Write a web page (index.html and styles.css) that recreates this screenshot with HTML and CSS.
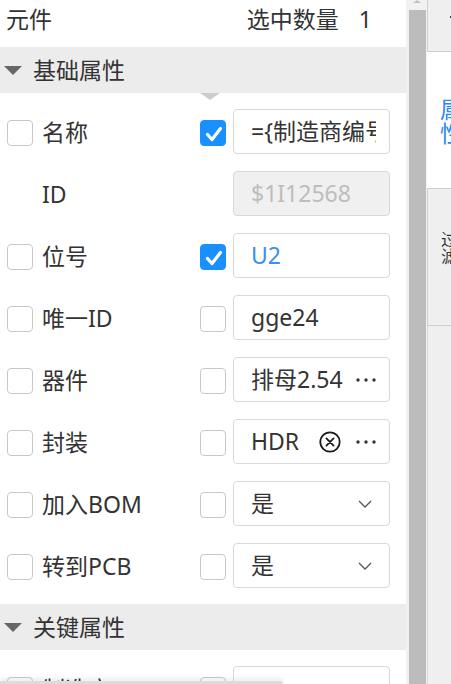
FILE: index.html
```html
<!DOCTYPE html>
<html lang="zh">
<head>
<meta charset="utf-8">
<title>元件属性</title>
<link rel="stylesheet" href="styles.css">
</head>
<body>
<div class="app">
  <div class="main">
    <div class="top">
      <span>元件</span>
      <span class="count">选中数量<span class="num">1</span></span>
    </div>

    <div class="sec-head"><span class="caret"></span><span>基础属性</span><span class="pointer"></span></div>
    <div class="rows">
      <div class="row">
        <span class="cb"></span><span class="label">名称</span>
        <span class="cb on"><svg viewBox="0 0 26 26"><path d="M6.5 13.5 L11 18.5 L19.5 7.5" fill="none" stroke="#fff" stroke-width="3.2" stroke-linecap="round" stroke-linejoin="round"/></svg></span>
        <div class="field"><span class="val">={制造商编号}</span></div>
      </div>
      <div class="row">
        <span class="cb ghost"></span><span class="label">ID</span>
        <span class="cb ghost"></span>
        <div class="field disabled"><span class="val">$1I12568</span></div>
      </div>
      <div class="row">
        <span class="cb"></span><span class="label">位号</span>
        <span class="cb on"><svg viewBox="0 0 26 26"><path d="M6.5 13.5 L11 18.5 L19.5 7.5" fill="none" stroke="#fff" stroke-width="3.2" stroke-linecap="round" stroke-linejoin="round"/></svg></span>
        <div class="field"><span class="val blue">U2</span></div>
      </div>
      <div class="row">
        <span class="cb"></span><span class="label">唯一ID</span>
        <span class="cb"></span>
        <div class="field"><span class="val">gge24</span></div>
      </div>
      <div class="row">
        <span class="cb"></span><span class="label">器件</span>
        <span class="cb"></span>
        <div class="field"><span class="val">排母2.54</span>
          <svg class="dots" viewBox="0 0 20 4"><circle cx="2" cy="2" r="1.7"/><circle cx="10" cy="2" r="1.7"/><circle cx="18" cy="2" r="1.7"/></svg>
        </div>
      </div>
      <div class="row">
        <span class="cb"></span><span class="label">封装</span>
        <span class="cb"></span>
        <div class="field"><span class="val">HDR</span>
          <svg class="clear" viewBox="0 0 22 22"><circle cx="11" cy="11" r="9.7" fill="none" stroke="#1a1a1a" stroke-width="1.8"/><path d="M7.4 7.4 L14.6 14.6 M14.6 7.4 L7.4 14.6" stroke="#1a1a1a" stroke-width="1.8" stroke-linecap="round"/></svg>
          <svg class="dots" viewBox="0 0 20 4"><circle cx="2" cy="2" r="1.7"/><circle cx="10" cy="2" r="1.7"/><circle cx="18" cy="2" r="1.7"/></svg>
        </div>
      </div>
      <div class="row">
        <span class="cb"></span><span class="label">加入BOM</span>
        <span class="cb"></span>
        <div class="field select"><span class="val">是</span>
          <svg class="chev" viewBox="0 0 14 8"><path d="M1 1 L7 7 L13 1" fill="none" stroke="#555" stroke-width="1.3"/></svg>
        </div>
      </div>
      <div class="row">
        <span class="cb"></span><span class="label">转到PCB</span>
        <span class="cb"></span>
        <div class="field select"><span class="val">是</span>
          <svg class="chev" viewBox="0 0 14 8"><path d="M1 1 L7 7 L13 1" fill="none" stroke="#555" stroke-width="1.3"/></svg>
        </div>
      </div>
    </div>

    <div class="sec-head"><span class="caret"></span><span>关键属性</span></div>
    <div class="rows">
      <div class="row">
        <span class="cb"></span><span class="label">制造商</span>
        <span class="cb"></span>
        <div class="field"><span class="val"></span></div>
      </div>
    </div>
  </div>

  <div class="vscroll"><span class="up"></span><div class="thumb"></div></div>

  <div class="side">
    <div class="tab first"><span class="mark"></span></div>
    <div class="tab active"><span class="vtext">属性</span></div>
    <div class="tab filter"><span class="vtext small">过滤</span></div>
    <div class="tab rest"></div>
  </div>

  <div class="hscroll"></div>
</div>
</body>
</html>
```

FILE: styles.css
```css
html, body {
  margin: 0;
  padding: 0;
  height: 100%;
  overflow: hidden;
  background: #fff;
}

body {
  font-family: "Noto Sans", "Noto Sans CJK SC", sans-serif;
  font-size: 23px;
  color: #333;
}

.app {
  display: flex;
  height: 684px;
  position: relative;
  overflow: hidden;
}

.main {
  width: 406px;
  flex: none;
  overflow: hidden;
}

.top {
  height: 39px;
  padding: 0 34px 8px 6px;
  display: flex;
  align-items: center;
  justify-content: space-between;
  line-height: 1;
}

.count .num {
  margin-left: 20px;
}

.sec-head {
  position: relative;
  height: 46px;
  background: #ececec;
  display: flex;
  align-items: center;
  line-height: 1;
}

.caret {
  width: 0;
  height: 0;
  margin: 0 11px 0 4px;
  border-left: 9px solid transparent;
  border-right: 9px solid transparent;
  border-top: 9px solid #666;
}

.pointer {
  position: absolute;
  left: 200px;
  bottom: -7px;
  width: 0;
  height: 0;
  border-left: 10.5px solid transparent;
  border-right: 10.5px solid transparent;
  border-top: 7px solid #cdcdcd;
}

.rows {
  display: flex;
  flex-direction: column;
  gap: 17px;
  padding: 16px 0;
}

.row {
  display: flex;
  align-items: center;
  height: 45px;
  padding: 0 16px 0 7px;
}

.cb {
  width: 26px;
  height: 26px;
  box-sizing: border-box;
  border: 1px solid #c8c8c8;
  border-radius: 4px;
  flex: none;
  margin-top: 3px;
  background: #fff;
}

.cb svg {
  display: block;
  width: 26px;
  height: 26px;
}

.cb.on {
  background: #1890ff;
  border-color: #1890ff;
}

.cb.ghost {
  visibility: hidden;
}

.label {
  flex: 1;
  margin-left: 9px;
  line-height: 1.2;
  white-space: nowrap;
  padding-top: 3px;
}

.field {
  width: 157px;
  height: 45px;
  box-sizing: border-box;
  flex: none;
  margin-left: 7px;
  border: 1px solid #d9d9d9;
  border-radius: 4px;
  background: #fff;
  display: flex;
  align-items: center;
  padding: 0 13px 0 17px;
  overflow: hidden;
}

.field.disabled {
  background: #f0f0f0;
  color: #bdbdbd;
}

.val {
  flex: 1;
  min-width: 0;
  overflow: hidden;
  white-space: nowrap;
  line-height: 1.35;
  text-overflow: clip;
}

.val.blue {
  color: #3d8ef0;
}

.dots {
  width: 20px;
  height: 4px;
  flex: none;
  fill: #333;
}

.clear {
  width: 22px;
  height: 22px;
  flex: none;
  margin-right: 15px;
}

.field.select {
  padding-right: 17px;
}

.chev {
  width: 14px;
  height: 8px;
  flex: none;
}

.vscroll {
  width: 21px;
  flex: none;
  background: #f1f1f1;
  display: flex;
  flex-direction: column;
  align-items: center;
  position: relative;
}

.vscroll .up {
  position: absolute;
  top: 0;
  left: 7px;
  width: 0;
  height: 0;
  border-left: 4.5px solid transparent;
  border-right: 4.5px solid transparent;
  border-bottom: 3px solid #c2c2c2;
}

.thumb {
  margin-top: 10px;
  margin-left: 1px;
  width: 17px;
  flex: 1;
  background: #bcbcbc;
}

.side {
  flex: 1;
  display: flex;
  flex-direction: column;
  background: #fff;
}

.tab {
  box-sizing: border-box;
  padding-left: 13px;
  display: flex;
}

.tab.first {
  height: 52px;
  background: #efefef;
  border-left: 1px solid #cfcfcf;
  border-bottom: 1px solid #cfcfcf;
}

.tab.first .mark {
  margin-top: 16px;
  margin-left: 9px;
  width: 3px;
  height: 2px;
  background: #333;
}

.tab.active {
  height: 136px;
  align-items: center;
  color: #2d86f0;
}

.tab.filter {
  height: 138px;
  background: #efefef;
  border-left: 1px solid #cfcfcf;
  border-top: 1px solid #cfcfcf;
  border-bottom: 1px solid #cfcfcf;
  padding-top: 41px;
}

.tab.rest {
  flex: 1;
  background: #efefef;
  border-left: 1px solid #dadada;
}

.vtext {
  width: 1em;
  line-height: 24px;
  word-break: break-all;
  font-family: "Noto Sans CJK SC", sans-serif;
}

.vtext.small {
  font-size: 17px;
  line-height: 17px;
}

.hscroll {
  position: absolute;
  left: 0;
  bottom: 0;
  width: 283px;
  height: 3px;
  background: #dcdcdc;
  box-shadow: 0 -2px 5px rgba(0, 0, 0, 0.12);
  border-radius: 0 2px 0 0;
}
```
